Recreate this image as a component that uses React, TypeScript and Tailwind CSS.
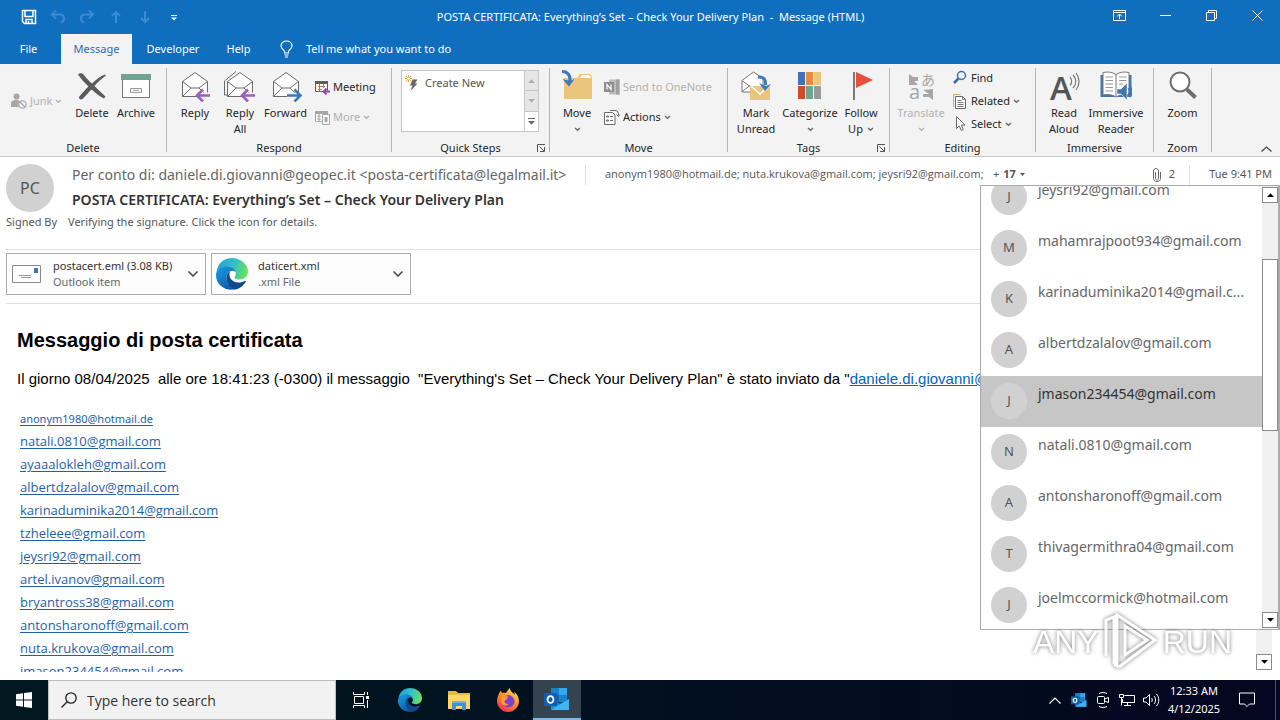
import React, { useState } from 'react';
import { clsx } from 'clsx';

/* ---------- data ---------- */

const bodyLinks = [
  'natali.0810@gmail.com',
  'ayaaalokleh@gmail.com',
  'albertdzalalov@gmail.com',
  'karinaduminika2014@gmail.com',
  'tzheleee@gmail.com',
  'jeysri92@gmail.com',
  'artel.ivanov@gmail.com',
  'bryantross38@gmail.com',
  'antonsharonoff@gmail.com',
  'nuta.krukova@gmail.com',
  'jmason234454@gmail.com',
];

const recipients = [
  'jeysri92@gmail.com',
  'mahamrajpoot934@gmail.com',
  'karinaduminika2014@gmail.c...',
  'albertdzalalov@gmail.com',
  'jmason234454@gmail.com',
  'natali.0810@gmail.com',
  'antonsharonoff@gmail.com',
  'thivagermithra04@gmail.com',
  'joelmccormick@hotmail.com',
];

/* ---------- small shared pieces ---------- */

interface IconProps {
  className?: string;
}

function Caret({ className = 'text-[#666]' }: IconProps) {
  return (
    <svg className={clsx('inline-block h-[5px] w-[7px] shrink-0', className)} viewBox="0 0 7 5" fill="none" stroke="currentColor" strokeWidth="1.3">
      <path d="M1 1l2.5 2.3L6 1" />
    </svg>
  );
}

function Triangle({ up = false }: { up?: boolean }) {
  return (
    <svg className="h-[4px] w-[7px]" viewBox="0 0 7 4" fill="currentColor">
      <path d={up ? 'M0 4L3.5 0.3 7 4z' : 'M0 0h7L3.5 3.8z'} />
    </svg>
  );
}

function ScrollButton({ up = false }: { up?: boolean }) {
  return (
    <button
      aria-label={up ? 'Scroll up' : 'Scroll down'}
      className="flex h-4 w-4 shrink-0 items-center justify-center border border-[#8a8a8a] bg-white text-black"
    >
      <Triangle up={up} />
    </button>
  );
}

function Launcher() {
  return (
    <button aria-label="More options" className="absolute right-1 bottom-1">
      <svg className="h-2 w-2" viewBox="0 0 8 8" fill="none" stroke="#555" strokeWidth="1">
        <path d="M0.500 8V0.500H8M2.500 2.500L7 7M7.500 3v4.500H3" />
      </svg>
    </button>
  );
}

interface GroupProps {
  label: string;
  className: string;
  launcher?: boolean;
  children: React.ReactNode;
}

function Group({ label, className, launcher = false, children }: GroupProps) {
  return (
    <section className={clsx('flex shrink-0', className)}>
      <div className="relative flex min-w-0 flex-1 flex-col">
        <div className="flex h-[76px] pt-[6px]">{children}</div>
        <h2 className="text-center text-[11px] leading-4 text-[#262626]">{label}</h2>
        {launcher && <Launcher />}
      </div>
      <div className="my-1 w-px bg-[#b4b4b4]" />
    </section>
  );
}

interface BigButtonProps {
  icon: React.ReactNode;
  lines: string[];
  className: string;
  caret?: boolean;
  disabled?: boolean;
}

function BigButton({ icon, lines, className, caret = false, disabled = false }: BigButtonProps) {
  return (
    <button
      disabled={disabled}
      className={clsx(
        'flex shrink-0 flex-col items-center text-[11px] leading-4 whitespace-nowrap',
        disabled ? 'text-[#b1b1b1]' : 'text-[#262626]',
        className,
      )}
    >
      <span className="mb-[3px] h-8 w-8">{icon}</span>
      {lines.map((line, index) => (
        <span key={line} className="flex items-center gap-1">
          {line}
          {caret && lines.length > 1 && index === lines.length - 1 && <Caret />}
        </span>
      ))}
      {caret && lines.length === 1 && (
        <span className="flex h-4 items-center">
          <Caret className={disabled ? 'text-[#b1b1b1]' : 'text-[#666]'} />
        </span>
      )}
    </button>
  );
}

interface SmallButtonProps {
  icon: React.ReactNode;
  label: string;
  caret?: boolean;
  disabled?: boolean;
}

function SmallButton({ icon, label, caret = false, disabled = false }: SmallButtonProps) {
  return (
    <button
      disabled={disabled}
      className={clsx('flex items-center gap-[3px] text-[11px] leading-4 whitespace-nowrap', disabled ? 'text-[#b1b1b1]' : 'text-[#262626]')}
    >
      <span className="h-4 w-4 shrink-0">{icon}</span>
      {label}
      {caret && <Caret className={disabled ? 'text-[#b1b1b1]' : 'text-[#666]'} />}
    </button>
  );
}

/* ---------- ribbon icons ---------- */

function DeleteIcon() {
  return (
    <svg viewBox="0 0 32 32" fill="#5b5b5b">
      <path d="M2 4.500C4 2.500 6.500 3 8 5c3 4 5 6 8 8.500C20 10 24 6 29 4.500l1 1C25 9 21 13 18.500 16c3.500 3.500 7 7 11 10.500l-1.500 2C23 26 19 22.500 15.500 19.500 12 23 9 26.500 6.500 29c-1.500 1-4 0-3.500-2C6 23 9.500 19.500 12.500 16.500 9 13 5 9 2 4.500z" />
    </svg>
  );
}

function ArchiveIcon() {
  return (
    <svg viewBox="0 0 32 32" fill="none">
      <path d="M2.500 9h27v18.500h-27z" fill="#fff" stroke="#777" />
      <path d="M1 4h30v6H1z" fill="#6fa392" />
      <path d="M10.500 18.500h11v4h-11z" stroke="#999" />
      <path d="M13 20.500h6" stroke="#999" />
    </svg>
  );
}

interface EnvelopeProps {
  arrow: 'left' | 'right';
  double?: boolean;
}

function EnvelopeIcon({ arrow, double = false }: EnvelopeProps) {
  return (
    <svg viewBox="0 0 32 32" fill="none" stroke="#6b6b6b">
      {double && <path d="M3 25H0.500V11L12 1.500" />}
      <path d="M3.500 11.500L16 2.500l12.500 9v15h-25z" fill="#fff" />
      <path d="M3.500 11.500L12 18h8l8.500-6.500M3.500 26.500L12 18M28.500 26.500L20 18" />
      {arrow === 'left' ? (
        <g stroke="#f3f3f3" strokeWidth="6">
          <path d="M19 25.500h12" />
          <path d="M31 25.500H18.500M24 19.500l-6 6 6 6" stroke="#9b5fc0" strokeWidth="2.600" />
        </g>
      ) : (
        <g stroke="#f3f3f3" strokeWidth="6">
          <path d="M17 25.500h12" />
          <path d="M17 25.500h13M24.500 19.500l6 6-6 6" stroke="#3b78bd" strokeWidth="2.600" />
        </g>
      )}
    </svg>
  );
}

function JunkIcon() {
  return (
    <svg viewBox="0 0 16 16" fill="#a6a6a6">
      <circle cx="5.500" cy="3.500" r="3" />
      <path d="M0 14V11c0-3 2-4 5-4 2 0 3 .4 4 1.500C7 10 7 12 8 14z" />
      <circle cx="11.500" cy="11.500" r="3.700" fill="#f3f3f3" stroke="#a6a6a6" strokeWidth="1.200" />
      <path d="M9 9l5 5" stroke="#a6a6a6" strokeWidth="1.200" />
    </svg>
  );
}

function MeetingIcon({ disabled = false }: { disabled?: boolean }) {
  const frame = disabled ? '#a6a6a6' : '#5e5e5e';
  return (
    <svg viewBox="0 0 16 16" fill="none">
      <path d="M1.500 2.500h12v10h-12z" fill="#fff" stroke={frame} />
      <path d="M1 2h13v3H1z" fill={frame} />
      {disabled ? (
        <g>
          <path d="M3 7h4M3 10h4M5 5v7" stroke={frame} />
          <path d="M8.500 5.500h7v10h-7z" fill="#fff" stroke={frame} />
          <path d="M10.500 8h3v5h-3z" fill={frame} />
        </g>
      ) : (
        <g>
          <path d="M4 7.500h7M4 10.500h4M5.500 5v7M9.500 5v4" stroke="#c4713a" />
          <path d="M16 12.500H9.500M12.500 9.500l-3 3 3 3" stroke="#8a48b5" strokeWidth="1.800" />
        </g>
      )}
    </svg>
  );
}

function LightningIcon() {
  return (
    <svg className="h-4 w-4" viewBox="0 0 16 16" fill="none">
      <path d="M7.500 4.500h5L10 8.500h2.500L5.500 16l2-5.500H5z" fill="#666" />
      <path d="M3.500 0v7M0 3.500h7M1 1l5 5M6 1l-5 5" stroke="#e0a350" />
      <circle cx="3.500" cy="3.500" r="1.300" fill="#fff" />
    </svg>
  );
}

function MoveIcon() {
  return (
    <svg viewBox="0 0 32 32">
      <path d="M3 8h13l3-4h10l2 3v22H3z" fill="#ebc57c" />
      <path d="M19 8l2.500-3H28l2 3z" fill="#fff" />
      <path d="M1 1.500c6 0 8.500 4 8 10" fill="none" stroke="#3b78bd" strokeWidth="3" />
      <path d="M1.500 9l6.500 7.500 5.500-7.500-4.500 2z" fill="#3b78bd" />
    </svg>
  );
}

function OneNoteIcon() {
  return (
    <svg viewBox="0 0 16 16">
      <path d="M5 0.500h10.500v15H5z" fill="#bdbdbd" />
      <path d="M12 0.500h3.500v15H12z" fill="#9f9f9f" />
      <path d="M0 3h10v10H0z" fill="#8d8d8d" />
      <path d="M3 10.500V5.500l4 5V5.500" fill="none" stroke="#fff" strokeWidth="1.200" />
    </svg>
  );
}

function ActionsIcon() {
  return (
    <svg viewBox="0 0 16 16" fill="none" stroke="#6b6b6b">
      <path d="M0.500 3.500h8l2.500 2.500v9.500H0.500z" fill="#fff" />
      <path d="M6 1.500h5c3 0 3.500 2 3.500 5M12.500 5.500l2 2 1.500-2" />
      <path d="M2.500 7h2v1h-2zM2.500 11h2v1h-2zM6 7.500h3M6 11.500h3" />
    </svg>
  );
}

function UnreadIcon() {
  return (
    <svg viewBox="0 0 32 32" fill="none">
      <path d="M2 10.500L13.500 2 23 8.500V22H2z" fill="#fff" stroke="#777" />
      <path d="M2 21.500l8-6M2 10.500l8 6" stroke="#777" />
      <path d="M10 16h20v14H10z" fill="#ebc57c" />
      <path d="M11 16l9 8 9-8" stroke="#fff" strokeWidth="1.500" />
      <path d="M18 7c6 0 8 2 7.500 8" stroke="#3b78bd" strokeWidth="3" />
      <path d="M19 13l6 8 6-7-5 2z" fill="#3b78bd" />
    </svg>
  );
}

function CategorizeIcon() {
  const cells = ['#3f73b5', '#eb8a3c', '#ebc57c', '#cf4b2c', '#6fa392', '#9a9a9a'];
  return (
    <svg viewBox="0 0 32 32">
      {cells.map((fill, i) => (
        <rect key={fill} x={4 + (i % 3) * 8} y={i < 3 ? 2 : 16} width="7" height="13" fill={fill} />
      ))}
    </svg>
  );
}

function FlagIcon() {
  return (
    <svg viewBox="0 0 32 32">
      <path d="M8 2h2v28H8z" fill="#7a7a7a" />
      <path d="M11 2l17 8-17 8z" fill="#e8503a" />
    </svg>
  );
}

function TranslateIcon() {
  return (
    <svg className="overflow-visible" viewBox="0 0 32 32" fill="#a6a6a6">
      <text x="16" y="15" fontSize="14" fontFamily="Noto Sans CJK JP, sans-serif">あ</text>
      <text x="4" y="29" fontSize="20" fontFamily="Open Sans, sans-serif">a</text>
      <path d="M4 4l4 3h5v4H9l4 4H4z" />
      <path d="M28 19v11l-4-3h-6v-3h6l-6-4z" />
    </svg>
  );
}

function FindIcon() {
  return (
    <svg viewBox="0 0 16 16" fill="none" stroke="#3b6ea8">
      <circle cx="9.500" cy="5.500" r="4" strokeWidth="1.500" />
      <path d="M6.500 8.500L2 13" strokeWidth="2.500" />
    </svg>
  );
}

function RelatedIcon() {
  return (
    <svg viewBox="0 0 16 16" fill="none">
      <path d="M1.500 14V1.500h7" stroke="#e8a55c" />
      <path d="M3.500 3.500h7l3 3v9h-10z" fill="#fff" stroke="#666" />
      <path d="M10.500 3.500v3h3M5.500 7.500h4M5.500 9.500h6M5.500 11.500h6M5.500 13.500h6" stroke="#777" />
    </svg>
  );
}

function SelectIcon() {
  return (
    <svg viewBox="0 0 16 16" fill="#fff" stroke="#666">
      <path d="M4.500 0.500v12l2.800-2.600 2 4.600 2-.9-2-4.500H13z" />
    </svg>
  );
}

function ReadAloudIcon() {
  return (
    <svg className="overflow-visible" viewBox="0 0 32 32" fill="none">
      <text x="2" y="30" fontSize="33" fontWeight="600" fontFamily="Open Sans, sans-serif" fill="#555">A</text>
      <path d="M22 7c2 2.500 2 6 0 8.500M25 5c3.500 4 3.500 9 0 13M28 3c4 5 4 12 0 17" stroke="#777" strokeWidth="1.200" />
    </svg>
  );
}

function ReaderIcon() {
  return (
    <svg viewBox="0 0 32 32" fill="none">
      <path d="M0.500 5h31v22h-31z" fill="#3f77b0" />
      <path d="M3 2.500c5-1 9-.5 13 2 4-2.500 8-3 13-2V25c-5-1-9-.5-13 2-4-2.500-8-3-13-2z" fill="#fff" stroke="#777" />
      <path d="M16 4.500V26" stroke="#777" />
      <path d="M5.500 7h7.500M5.500 10.500h7.500M5.500 14h7.500M5.500 17.500h7.500M5.500 21h7.500M19 7h7.500M19 10.500h7.500M19 14h4" stroke="#999" />
      <path d="M17 19h4l6-6v17l-6-6h-4z" fill="#3f77b0" stroke="#f3f3f3" strokeWidth="0.600" />
      <path d="M28 18c1.500 2 1.500 5 0 7M30 16c2.500 3 2.500 8 0 11" stroke="#3f77b0" strokeWidth="1.200" />
    </svg>
  );
}

function ZoomIcon() {
  return (
    <svg viewBox="0 0 32 32" fill="#fff" stroke="#6e6e6e">
      <circle cx="13" cy="12" r="9.500" strokeWidth="2" />
      <path d="M20 19.500l8.500 8" strokeWidth="4" />
    </svg>
  );
}

/* ---------- app logos ---------- */

function EdgeLogo({ className, id }: { className: string; id: string }) {
  return (
    <svg className={className} viewBox="0 0 32 32">
      <defs>
        <linearGradient id={`${id}-top`} x1="0" y1="0.300" x2="1" y2="0.500">
          <stop offset="0" stopColor="#1fa2dd" />
          <stop offset="0.550" stopColor="#35c1c4" />
          <stop offset="1" stopColor="#6be35a" />
        </linearGradient>
        <linearGradient id={`${id}-left`} x1="0" y1="0" x2="0.600" y2="1">
          <stop offset="0" stopColor="#1b9de2" />
          <stop offset="1" stopColor="#0a5cae" />
        </linearGradient>
      </defs>
      <path d="M0.500 14C2 5 8 0 16 0c9 0 16 6.500 16 13.500 0 5-4 8-8.500 8-3.500 0-5.500-1.200-5-2.700 1-1.200 1.500-2.300 1.300-3.800C19 11 15 9 11 9 6 9 2 11.500 0.500 14z" fill={`url(#${id}-top)`} />
      <path d="M0.500 14C2.500 10 6.500 8.500 10.500 8.500c5 0 8.500 2.500 9.300 5.500-4-3-9.300 0-9.300 6 0 6 4 10.500 9.500 11.300C9 33.500 0 27 0 17c0-1 .2-2 .5-3z" fill={`url(#${id}-left)`} />
      <path d="M10.500 20c0-3 1.200-5.500 3.500-6.800-2 5.300 1.500 11.300 8.500 11.300 2.500 0 4.500-.6 6.500-1.500.8-.3 1.200.3.700 1C26.500 28.500 23 31 19.500 31.500 14 30.500 10.500 26 10.500 20z" fill="#114a8b" />
    </svg>
  );
}

function OutlookLogo({ className }: { className: string }) {
  return (
    <svg className={className} viewBox="0 0 26 24">
      <path d="M7 1h16v14H7z" fill="#1067b5" />
      <path d="M7 1h8v7H7z" fill="#1482d0" />
      <path d="M15 1h8v7h-8z" fill="#34a9ea" />
      <path d="M15 8h8v7h-8z" fill="#1a80cf" />
      <path d="M7 12l9 5 9-5v11H7z" fill="#1b90dc" />
      <path d="M7 23l18-11v11z" fill="#42b3ec" />
      <path d="M0 6h13v13H0z" fill="#0f5fae" />
      <ellipse cx="6.500" cy="12.500" rx="3" ry="3.400" fill="none" stroke="#fff" strokeWidth="1.800" />
    </svg>
  );
}

function FirefoxLogo() {
  return (
    <svg className="h-6 w-6" viewBox="0 0 24 24">
      <defs>
        <linearGradient id="ff-body" x1="0.800" y1="0" x2="0.200" y2="1">
          <stop offset="0" stopColor="#ffe14d" />
          <stop offset="0.450" stopColor="#ff9425" />
          <stop offset="1" stopColor="#f0265f" />
        </linearGradient>
      </defs>
      <path d="M3 6c.3-1.500 1-2.500 2-3.500 0 1.200.5 2 1.500 2.500C8 4.500 9 4.500 10 5c1-1.800 2.200-3.500 4-5 0 2.500 1.500 3.500 3 5 .8.800 1.300 1.200 1.500 2V4c3 2.500 4.500 6 4.500 9 0 6-5 11-11 11S1 19 1 13c0-2.800.8-5 2-7z" fill="url(#ff-body)" />
      <path d="M7 11c1-1.500 3-1.500 4.500-1 .5-1.200-.2-2.200-1-3 4.500-.5 8 2.500 8 6.500 0 3.500-3 5.500-6 5.500-3.500 0-6-2-6-5 0-1.200 0-2 .5-3z" fill="#7c40d4" />
      <path d="M5 10.500c1.500-1.500 4-1 6.500 0-1 1.500-3 1.500-3 3 0 1.800 2 2.500 4 2.200-1 2-4 2.300-5.500 1-1.700-1.400-2.500-4-2-6.200z" fill="#ffa02e" />
    </svg>
  );
}

function ExplorerLogo() {
  return (
    <svg className="h-5 w-[22px]" viewBox="0 0 22 20">
      <path d="M0 1h8l2 2h12v16H0z" fill="#f0b73e" />
      <path d="M0 5h22v14H0z" fill="#fbd768" />
      <path d="M4 11h14v9h-4v-4H8v4H4z" fill="#3e93d6" />
      <path d="M4 11h14v2H4z" fill="#67b3ea" />
    </svg>
  );
}

/* ---------- window chrome ---------- */

function TitleBar() {
  return (
    <header className="flex h-[34px] items-center bg-[#106ebe] text-white">
      <div className="flex flex-1 items-center gap-[13px] pl-[21px]">
        <button aria-label="Save">
          <svg className="h-4 w-4" viewBox="0 0 16 16" fill="none" stroke="#fff" strokeWidth="1.500">
            <path d="M1.500 1.500h13v13h-11l-2-2zM4 2v5.500h8V2M5 14.500v-4h6v4" />
            <path d="M7.500 12v2.500" />
          </svg>
        </button>
        <button aria-label="Undo" disabled>
          <svg className="h-4 w-4" viewBox="0 0 16 16" fill="none" stroke="#3c8ad0" strokeWidth="2">
            <path d="M6 1.500l-4 4 4 4M2.500 5.500H10c5 0 5.500 6 1 8" />
          </svg>
        </button>
        <button aria-label="Redo" disabled>
          <svg className="h-4 w-4" viewBox="0 0 16 16" fill="none" stroke="#3c8ad0" strokeWidth="2">
            <path d="M10 1.500l4 4-4 4M13.500 5.500H6c-5 0-5.500 6-1 8" />
          </svg>
        </button>
        <button aria-label="Previous item" disabled>
          <svg className="h-4 w-4" viewBox="0 0 16 16" fill="none" stroke="#3c8ad0" strokeWidth="2">
            <path d="M8 14V3M4 7l4-4 4 4" />
          </svg>
        </button>
        <button aria-label="Next item" disabled>
          <svg className="h-4 w-4" viewBox="0 0 16 16" fill="none" stroke="#3c8ad0" strokeWidth="2">
            <path d="M8 2v11M4 9l4 4 4-4" />
          </svg>
        </button>
        <button aria-label="Customize toolbar">
          <svg className="h-4 w-4" viewBox="0 0 16 16" fill="#fff">
            <path d="M5 6h6v1H5zM5 8.500h6l-3 3z" />
          </svg>
        </button>
      </div>
      <h1 className="text-[11px] whitespace-pre">
        POSTA CERTIFICATA: Everything’s Set – Check Your Delivery Plan  -  Message (HTML)
      </h1>
      <div className="mb-1 flex flex-1 items-center justify-end">
        <button aria-label="Ribbon display options" className="flex w-[46px] justify-center">
          <svg className="h-[11px] w-[13px]" viewBox="0 0 13 11" fill="none" stroke="#fff">
            <path d="M0.500 0.500h12v10h-12zM0.500 2.500h12M6.500 9V4.500M4 6.500l2.500-2.500L9 6.500" />
          </svg>
        </button>
        <button aria-label="Minimize" className="flex w-[46px] justify-center">
          <svg className="h-[11px] w-[11px]" viewBox="0 0 11 11" stroke="#fff">
            <path d="M0 5.500h11" />
          </svg>
        </button>
        <button aria-label="Restore" className="flex w-[46px] justify-center">
          <svg className="h-[11px] w-[11px]" viewBox="0 0 11 11" fill="none" stroke="#fff">
            <path d="M0.500 2.500h8v8h-8zM2.500 2.500v-2h8v8h-2" />
          </svg>
        </button>
        <button aria-label="Close" className="flex w-[46px] justify-center">
          <svg className="h-[11px] w-[11px]" viewBox="0 0 11 11" stroke="#fff">
            <path d="M0.500 0.500l10 10M10.500 0.500l-10 10" />
          </svg>
        </button>
      </div>
    </header>
  );
}

function Tabs() {
  return (
    <nav className="flex h-[30px] items-stretch bg-[#106ebe] text-[11px] text-white">
      <button className="w-[61px] pr-1">File</button>
      <button className="w-[71px] bg-[#f3f3f3] text-[#2a6eb5]">Message</button>
      <button className="w-[82px]">Developer</button>
      <button className="w-[49px]">Help</button>
      <label htmlFor="tell-me" className="flex items-center pl-[17px]">
        <svg className="h-[18px] w-[13px]" viewBox="0 0 13 18" fill="none" stroke="#fff" strokeWidth="1.200">
          <path d="M4.500 13v-2C3 9.500 1 8.500 1 5.800 1 3 3.500 1 6.500 1S12 3 12 5.800c0 2.700-2 3.700-3.500 5.200v2zM4.500 15h4M5 17h3" />
        </svg>
      </label>
      <input
        id="tell-me"
        aria-label="Search commands"
        className="ml-[13px] w-48 bg-transparent outline-none placeholder:text-white placeholder:opacity-100"
        placeholder="Tell me what you want to do"
      />
    </nav>
  );
}

function Ribbon() {
  return (
    <div className="flex h-[93px] border-b border-[#c8c8c8] bg-[#f3f3f3]">
      <Group label="Delete" className="w-[167px]">
        <div className="flex w-[69px] shrink-0 items-start pt-[23px] pl-[11px]">
          <SmallButton icon={<JunkIcon />} label="Junk" caret disabled />
        </div>
        <BigButton className="w-[46px]" icon={<DeleteIcon />} lines={['Delete']} />
        <BigButton className="w-[42px]" icon={<ArchiveIcon />} lines={['Archive']} />
      </Group>

      <Group label="Respond" className="w-[225px]">
        <BigButton className="w-[56px]" icon={<EnvelopeIcon arrow="left" />} lines={['Reply']} />
        <BigButton className="w-[34px]" icon={<EnvelopeIcon arrow="left" double />} lines={['Reply', 'All']} />
        <BigButton className="w-[57px]" icon={<EnvelopeIcon arrow="right" />} lines={['Forward']} />
        <div className="flex flex-col gap-[14px] pt-[9px]">
          <SmallButton icon={<MeetingIcon />} label="Meeting" />
          <SmallButton icon={<MeetingIcon disabled />} label="More" caret disabled />
        </div>
      </Group>

      <Group label="Quick Steps" className="w-[158px]" launcher>
        <div className="ml-[9px] flex h-[62px] w-[138px] border border-[#c6c6c6] bg-white">
          <button className="flex h-6 flex-1 items-center gap-1 pl-[3px] text-[11px] whitespace-nowrap text-[#555]">
            <LightningIcon />
            Create New
          </button>
          <div className="flex w-[14px] shrink-0 flex-col divide-y divide-[#c6c6c6] border-l border-[#c6c6c6] text-[#b0b0b0]">
            <button aria-label="Previous row" className="flex flex-1 items-center justify-center bg-[#e6e6e6]">
              <Triangle up />
            </button>
            <button aria-label="Next row" className="flex flex-1 items-center justify-center bg-[#e6e6e6]">
              <Triangle />
            </button>
            <button aria-label="More steps" className="flex flex-1 flex-col items-center justify-center gap-[2px] text-[#666]">
              <span className="h-px w-[7px] bg-[#666]" />
              <Triangle />
            </button>
          </div>
        </div>
      </Group>

      <Group label="Move" className="w-[178px]">
        <BigButton className="w-[54px]" icon={<MoveIcon />} lines={['Move']} caret />
        <div className="flex flex-col gap-[14px] pt-[9px]">
          <SmallButton icon={<OneNoteIcon />} label="Send to OneNote" disabled />
          <SmallButton icon={<ActionsIcon />} label="Actions" caret />
        </div>
      </Group>

      <Group label="Tags" className="w-[162px]" launcher>
        <BigButton className="w-[56px]" icon={<UnreadIcon />} lines={['Mark', 'Unread']} />
        <BigButton className="w-[52px]" icon={<CategorizeIcon />} lines={['Categorize']} caret />
        <BigButton className="w-[50px]" icon={<FlagIcon />} lines={['Follow', 'Up']} caret />
      </Group>

      <Group label="Editing" className="w-[146px]">
        <BigButton className="w-[62px]" icon={<TranslateIcon />} lines={['Translate']} caret disabled />
        <div className="flex flex-col gap-[7px]">
          <SmallButton icon={<FindIcon />} label="Find" />
          <SmallButton icon={<RelatedIcon />} label="Related" caret />
          <SmallButton icon={<SelectIcon />} label="Select" caret />
        </div>
      </Group>

      <Group label="Immersive" className="w-[118px]">
        <BigButton className="w-[56px]" icon={<ReadAloudIcon />} lines={['Read', 'Aloud']} />
        <BigButton className="w-[48px]" icon={<ReaderIcon />} lines={['Immersive', 'Reader']} />
      </Group>

      <Group label="Zoom" className="w-[58px]">
        <BigButton className="w-full" icon={<ZoomIcon />} lines={['Zoom']} />
      </Group>

      <div className="flex flex-1 items-end justify-end pr-2 pb-1">
        <button aria-label="Collapse the ribbon">
          <svg className="h-[6px] w-[11px]" viewBox="0 0 11 6" fill="none" stroke="#444" strokeWidth="1.200">
            <path d="M0.500 5.500l5-4.500 5 4.500" />
          </svg>
        </button>
      </div>
    </div>
  );
}

/* ---------- message ---------- */

function MessageHeader() {
  return (
    <div className="flex h-[92px] flex-col pt-[7px] text-[#555]">
      <div className="flex h-[50px]">
        <div className="ml-[6px] flex h-12 w-12 shrink-0 items-center justify-center rounded-full bg-[#d1d1d1] text-[16px] text-[#555]">
          PC
        </div>
        <div className="flex min-w-0 flex-1 flex-col pl-[18px]">
          <div className="flex h-[22px] items-center whitespace-nowrap">
            <span className="w-[513px] text-[14px] text-[#666]">
              Per conto di: daniele.di.giovanni@geopec.it &lt;posta-certificata@legalmail.it&gt;
            </span>
            <span className="h-5 w-px bg-[#e1e1e1]" />
            <span className="ml-[19px] w-[378px] font-['Open_Sans',sans-serif] text-[11px]">
              anonym1980@hotmail.de; nuta.krukova@gmail.com; jeysri92@gmail.com;
            </span>
            <button className="ml-[10px] flex items-center gap-1 text-[11px]">
              + <b>17</b>
              <svg className="h-[3px] w-[5px]" viewBox="0 0 5 3" fill="#555">
                <path d="M0 0h5L2.500 3z" />
              </svg>
            </button>
            <div className="ml-auto flex items-center text-[11px]">
              <svg className="mr-2 h-[14px] w-[8px]" viewBox="0 0 8 14" fill="none" stroke="#666">
                <path d="M2.500 4v6.500c0 2 3 2 3 0V3c0-3.300-5-3.300-5 0v7.500c0 4 7 4 7 0V4" />
              </svg>
              2
              <span className="ml-[14px] h-5 w-px bg-[#e1e1e1]" />
              <time className="w-[90px] pr-2 text-right">Tue 9:41 PM</time>
            </div>
          </div>
          <h2 className="text-[14px] leading-[30px] font-semibold text-[#333]">
            POSTA CERTIFICATA: Everything’s Set – Check Your Delivery Plan
          </h2>
        </div>
      </div>
      <div className="flex gap-[11px] pl-[6px] text-[11px] leading-4">
        <span>Signed By</span>
        <span>Verifying the signature. Click the icon for details.</span>
      </div>
    </div>
  );
}

interface AttachmentProps {
  icon: React.ReactNode;
  name: string;
  kind: string;
}

function Attachment({ icon, name, kind }: AttachmentProps) {
  return (
    <button className="flex h-[42px] w-[200px] items-center border border-[#ababab] bg-[#fdfdfd] pr-[7px] pl-[4px] text-left text-[11px] leading-4">
      <span className="flex w-[34px] shrink-0 items-center">{icon}</span>
      <span className="ml-2 flex flex-1 flex-col whitespace-nowrap">
        <span className="text-[#333]">{name}</span>
        <span className="text-[#666]">{kind}</span>
      </span>
      <svg className="h-[6px] w-[10px]" viewBox="0 0 10 6" fill="none" stroke="#444" strokeWidth="1.500">
        <path d="M0.500 0.500L5 5l4.500-4.500" />
      </svg>
    </button>
  );
}

function Attachments() {
  return (
    <div className="ml-[6px] flex h-[55px] gap-[5px] border-y border-[#e1e1e1] pt-[3px]">
      <Attachment
        name="postacert.eml (3.08 KB)"
        kind="Outlook item"
        icon={
          <svg className="ml-px h-[18px] w-[29px]" viewBox="0 0 29 18" fill="#fff">
            <path d="M0.500 0.500h28v17h-28z" stroke="#888" />
            <path d="M22 3h4v5h-4z" fill="#3f73b5" />
            <path d="M7 10.500h12M9 12.500h10" stroke="#999" />
          </svg>
        }
      />
      <Attachment name="daticert.xml" kind=".xml File" icon={<EdgeLogo id="att" className="h-8 w-8" />} />
    </div>
  );
}

function MessageBody() {
  return (
    <div className="flex min-h-0 flex-1">
      <article className="mb-2 min-w-0 flex-1 overflow-hidden pt-6 pl-[17px] font-['Liberation_Sans',sans-serif] text-black">
        <h2 className="text-[20px] leading-6 font-bold">Messaggio di posta certificata</h2>
        <p className="mt-[17px] text-[15px] leading-5 whitespace-pre">
          Il giorno 08/04/2025  alle ore 18:41:23 (-0300) il messaggio  "Everything's Set – Check Your Delivery Plan" è stato inviato da "
          <a href="#sender" className="text-[#0563c1] underline">daniele.di.giovanni@geopec.it</a>"
        </p>
        <ul className="mt-[18px] pl-[3px] font-['Open_Sans',sans-serif] text-[13px] leading-[23px] text-[#1f5fa8]">
          <li className="font-['Noto_Sans',sans-serif] text-[11px]">
            <a href="#anonym1980" className="underline underline-offset-2">anonym1980@hotmail.de</a>
          </li>
          {bodyLinks.map(mail => (
            <li key={mail}>
              <a href={`#${mail}`} className="underline underline-offset-2">{mail}</a>
            </li>
          ))}
        </ul>
      </article>
      <div className="mr-2 mb-[10px] flex w-4 shrink-0 flex-col justify-between bg-[#f0f0f0]">
        <ScrollButton up />
        <ScrollButton />
      </div>
    </div>
  );
}

function RecipientPopup() {
  const [selected, setSelected] = useState(4);

  return (
    <div className="absolute top-7 right-0 flex h-[445px] w-[300px] border border-r-2 border-[#ababab] bg-white">
      <div className="min-w-0 flex-1 overflow-hidden">
        <ul className="-mt-[14px]">
          {recipients.map((mail, index) => (
            <li key={mail}>
              <button
                onClick={() => setSelected(index)}
                className={clsx('flex h-[51px] w-full items-start pt-[7px] pl-[10px] text-left', index === selected && 'bg-[#c6c6c6]')}
              >
                <span className="flex h-9 w-9 shrink-0 items-center justify-center rounded-full bg-[#d1d1d1] text-[13px] text-[#555]">
                  {mail[0].toUpperCase()}
                </span>
                <span className={clsx('pl-[11px] text-[14px] leading-[22px] whitespace-nowrap', index === selected ? 'text-[#333]' : 'text-[#666]')}>
                  {mail}
                </span>
              </button>
            </li>
          ))}
        </ul>
      </div>
      <div className="flex w-4 shrink-0 flex-col bg-[#f0f0f0] py-px">
        <ScrollButton up />
        <div className="mt-14 h-[172px] border border-[#8a8a8a] bg-white" />
        <div className="mt-auto">
          <ScrollButton />
        </div>
      </div>
    </div>
  );
}

function Watermark() {
  return (
    <div className="pointer-events-none absolute right-12 bottom-2 flex items-center gap-1 font-['Liberation_Sans',sans-serif] text-[32px] leading-[60px] text-white opacity-90 drop-shadow-[0_0_2px_#666]">
      <span>ANY</span>
      <svg className="h-[60px] w-14" viewBox="0 0 56 60" fill="none" stroke="#fff" strokeWidth="3">
        <path d="M3 44V8l8-3v47M11 52l3 2V3l38 25-36 27" />
        <path d="M22 14l22 14-22 15z" />
      </svg>
      <span>RUN</span>
    </div>
  );
}

/* ---------- taskbar ---------- */

function Taskbar() {
  return (
    <footer className="flex h-10 shrink-0 items-stretch bg-linear-to-r from-[#011820] to-[#030720] text-white">
      <button aria-label="Start" className="flex w-12 items-center justify-center">
        <svg className="h-4 w-4" viewBox="0 0 16 16" fill="#fff">
          <path d="M0 2.200l7-1v6.300H0zM8 1l8-1v7.500H8zM0 8.500h7v6.300l-7-1zM8 8.500h8V16l-8-1z" />
        </svg>
      </button>
      <div className="flex w-72 items-center gap-[10px] border border-[#bdbdbd] bg-[#f2f2f2] pl-3 text-[#222]">
        <svg className="h-4 w-4 shrink-0" viewBox="0 0 16 16" fill="none" stroke="#222" strokeWidth="1.300">
          <circle cx="10" cy="6" r="5.200" />
          <path d="M6.200 9.800L0.500 15.500" />
        </svg>
        <input
          aria-label="Search"
          placeholder="Type here to search"
          className="min-w-0 flex-1 bg-transparent font-['Open_Sans',sans-serif] text-[14px] outline-none placeholder:text-[#333] placeholder:opacity-100"
        />
      </div>
      <button aria-label="Task view" className="flex w-[49px] items-center justify-center">
        <svg className="h-4 w-4" viewBox="0 0 16 16" fill="none" stroke="#fff">
          <path d="M1.500 4.500h9v7h-9zM0.500 0v2.500h11V0M0.500 16v-2.500h11V16M14.500 0v3M14.500 8v8" />
          <path d="M13 4h3v3h-3z" fill="#fff" stroke="none" />
        </svg>
      </button>
      <button aria-label="Edge" className="flex w-[49px] items-center justify-center">
        <EdgeLogo id="task" className="h-6 w-6" />
      </button>
      <button aria-label="File Explorer" className="flex w-[49px] items-center justify-center">
        <ExplorerLogo />
      </button>
      <button aria-label="Firefox" className="flex w-[49px] items-center justify-center">
        <FirefoxLogo />
      </button>
      <button aria-label="Outlook" className="ml-px flex w-12 items-center justify-center border-b-2 border-[#76b9ed] bg-[#34434e]">
        <OutlookLogo className="h-6 w-[26px]" />
      </button>

      <div className="ml-auto flex items-center">
        <button aria-label="Show hidden icons" className="flex w-6 justify-center">
          <svg className="h-[7px] w-3" viewBox="0 0 12 7" fill="none" stroke="#fff" strokeWidth="1.200">
            <path d="M0.500 6.500L6 1l5.500 5.500" />
          </svg>
        </button>
        <button aria-label="Outlook tray" className="flex w-6 justify-center">
          <OutlookLogo className="h-4 w-4" />
        </button>
        <button aria-label="Meet now" className="flex w-6 justify-center">
          <svg className="h-4 w-3" viewBox="0 0 12 16" fill="none" stroke="#fff">
            <rect x="0.500" y="4.500" width="7" height="7" rx="1" />
            <path d="M7.500 7l4-1.500v5L7.500 9M2 1.500c2.500-1.300 5.500-1.300 8 0M2 14.500c2.500 1.300 5.500 1.300 8 0" />
          </svg>
        </button>
        <button aria-label="Network" className="flex w-6 justify-center">
          <svg className="h-[14px] w-4" viewBox="0 0 16 14" fill="none" stroke="#fff">
            <path d="M5.500 2.500h10v7h-12V6M8.500 9.500v3M5 12.500h7M0.500 1.500h4v3h-4zM2.500 4.500v8" />
          </svg>
        </button>
        <button aria-label="Volume" className="flex w-6 justify-center">
          <svg className="h-[14px] w-[17px]" viewBox="0 0 17 14" fill="none" stroke="#fff">
            <path d="M0.500 5h2.500l3.500-3.500v11L3 9H0.500zM8.500 5c1 1 1 3 0 4M11 3c2 2 2 6 0 8M13.500 1c3 3 3 9 0 12" />
          </svg>
        </button>
        <time className="w-[62px] text-center text-[11px] leading-[18px] whitespace-nowrap">
          12:33 AM
          <br />
          4/12/2025
        </time>
        <button aria-label="Notifications" className="flex w-11 justify-center">
          <svg className="h-4 w-4" viewBox="0 0 16 16" fill="none" stroke="#fff">
            <path d="M0.500 1h15v11h-5L8 14.500 5.500 12h-5z" />
          </svg>
        </button>
        <span className="ml-[6px] h-10 w-[5px] border-l border-[#4c5162]" />
      </div>
    </footer>
  );
}

export default function App() {
  return (
    <div className="flex h-screen flex-col overflow-hidden bg-white font-['Noto_Sans',sans-serif]">
      <TitleBar />
      <Tabs />
      <Ribbon />
      <main className="relative flex min-h-0 flex-1 flex-col">
        <MessageHeader />
        <Attachments />
        <MessageBody />
        <RecipientPopup />
        <Watermark />
      </main>
      <Taskbar />
    </div>
  );
}
